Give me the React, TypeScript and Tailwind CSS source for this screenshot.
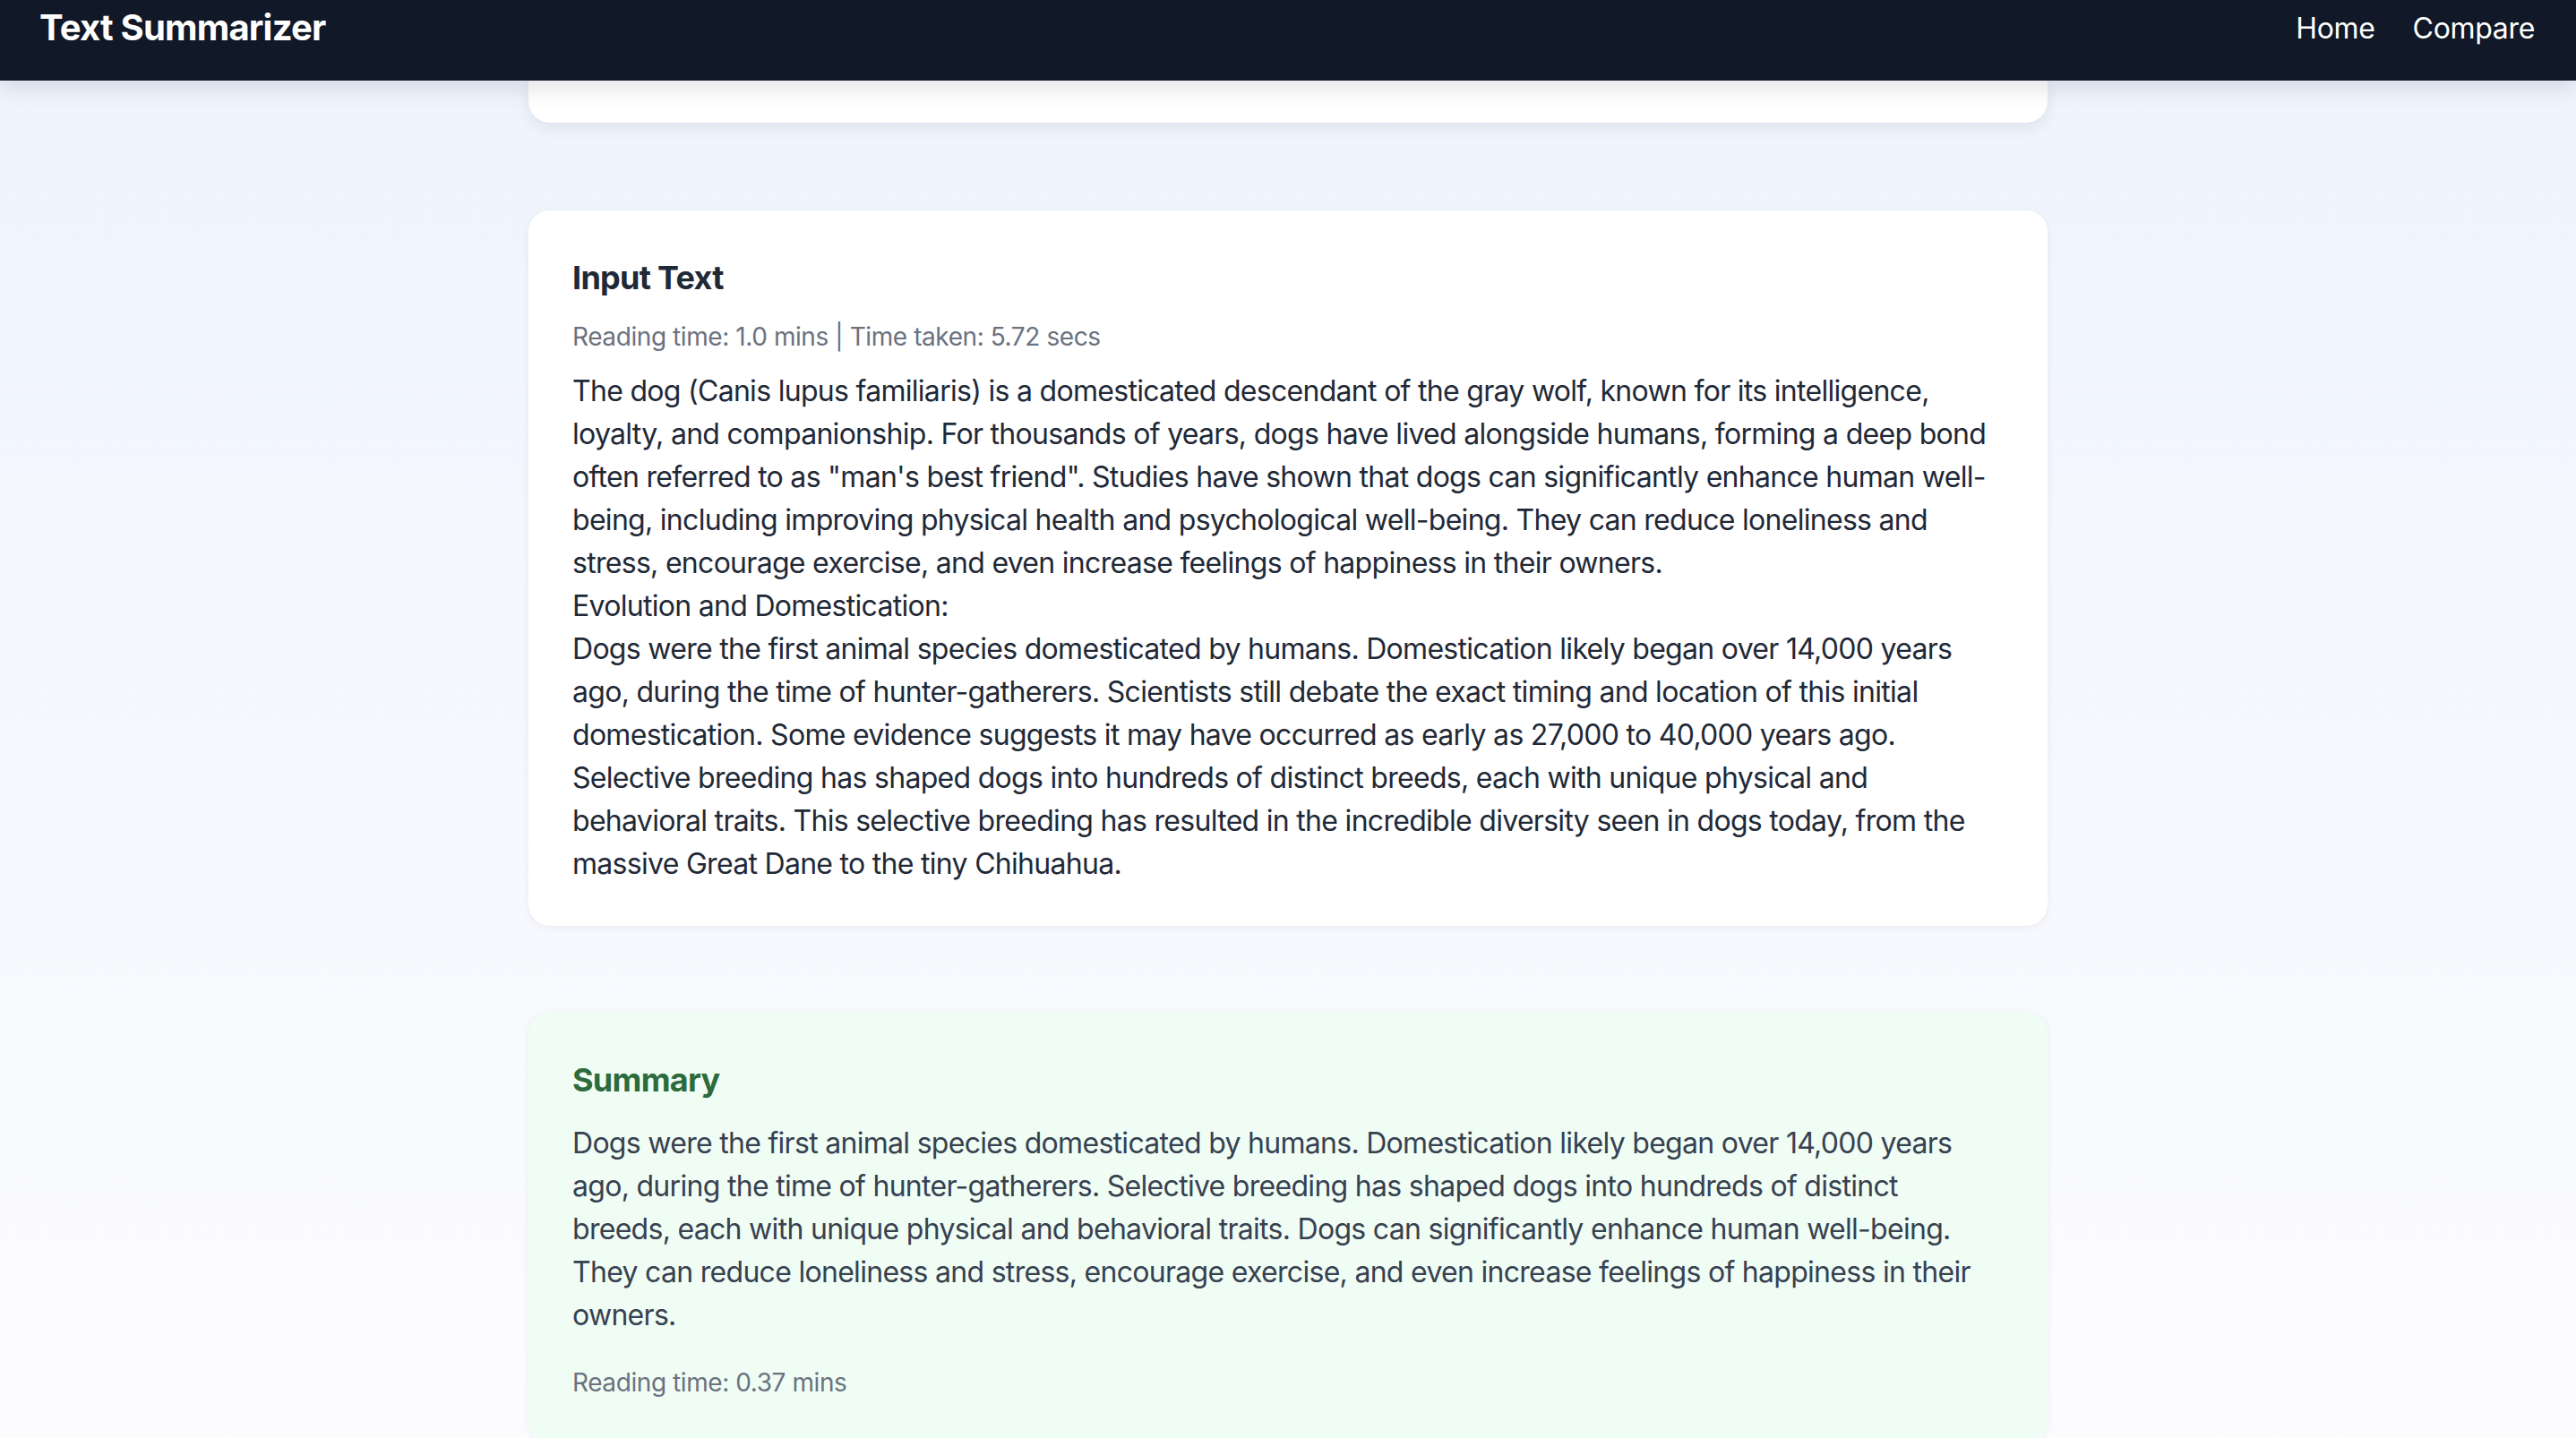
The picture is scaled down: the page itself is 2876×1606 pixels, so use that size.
import React from "react";

const inputLines = [
  "The dog (Canis lupus familiaris) is a domesticated descendant of the gray wolf, known for its intelligence,",
  "loyalty, and companionship. For thousands of years, dogs have lived alongside humans, forming a deep bond",
  "often referred to as \"man's best friend\". Studies have shown that dogs can significantly enhance human well-",
  "being, including improving physical health and psychological well-being. They can reduce loneliness and",
  "stress, encourage exercise, and even increase feelings of happiness in their owners.",
  "Evolution and Domestication:",
  "Dogs were the first animal species domesticated by humans. Domestication likely began over 14,000 years",
  "ago, during the time of hunter-gatherers. Scientists still debate the exact timing and location of this initial",
  "domestication. Some evidence suggests it may have occurred as early as 27,000 to 40,000 years ago.",
  "Selective breeding has shaped dogs into hundreds of distinct breeds, each with unique physical and",
  "behavioral traits. This selective breeding has resulted in the incredible diversity seen in dogs today, from the",
  "massive Great Dane to the tiny Chihuahua.",
];

const summaryLines = [
  "Dogs were the first animal species domesticated by humans. Domestication likely began over 14,000 years",
  "ago, during the time of hunter-gatherers. Selective breeding has shaped dogs into hundreds of distinct",
  "breeds, each with unique physical and behavioral traits. Dogs can significantly enhance human well-being.",
  "They can reduce loneliness and stress, encourage exercise, and even increase feelings of happiness in their",
  "owners.",
];

export default function App() {
  return (
    <div
      className="h-[1606px] w-full overflow-hidden bg-gradient-to-b from-[#eef3fd] to-[#fcfcfe] flex flex-col"
      style={{ fontFamily: "Inter, 'Noto Sans', sans-serif" }}
    >
      <nav className="relative z-10 h-[90px] shrink-0 bg-[#111827] shadow-[0_8px_24px_rgba(15,23,42,0.12)] flex items-start justify-between pl-[44px] pr-[46px]">
        <div className="pt-[3px] text-[40px] leading-[56px] font-bold text-white tracking-[-0.02em]">
          Text Summarizer
        </div>
        <div className="pt-[8px] flex gap-[42px] text-[32px] leading-[48px] text-white tracking-[-0.01em]">
          <span>Home</span>
          <span>Compare</span>
        </div>
      </nav>
      <main className="w-[1696px] mx-auto flex flex-col">
        <div className="h-[47px] bg-white rounded-b-[24px] shadow-[0_6px_16px_rgba(15,23,42,0.08)]" />
        <section className="mt-[98px] bg-white rounded-[24px] shadow-[0_2px_8px_rgba(15,23,42,0.06)] px-[49px] pt-[47px] pb-[45px]">
          <h2 className="text-[36px] leading-[56px] font-bold text-[#1f2937] tracking-[-0.02em]">Input Text</h2>
          <p className="mt-[18px] text-[28px] leading-[40px] text-[#6b7280] tracking-[-0.015em]">
            Reading time: 1.0 mins | Time taken: 5.72 secs
          </p>
          <div className="mt-[17px] text-[32px] leading-[48px] text-[#1f2937] tracking-[-0.022em]">
            {inputLines.map((l, i) => (
              <div key={i} className="whitespace-nowrap">{l}</div>
            ))}
          </div>
        </section>
        <section className="mt-[96px] bg-[#f0fdf4] rounded-[24px] shadow-[0_2px_8px_rgba(15,23,42,0.06)] px-[49px] pt-[48px] pb-[48px]">
          <h2 className="text-[36px] leading-[56px] font-bold text-[#2e6b3c] tracking-[-0.02em]">Summary</h2>
          <div className="mt-[19px] text-[32px] leading-[48px] text-[#374151] tracking-[-0.022em]">
            {summaryLines.map((l, i) => (
              <div key={i} className="whitespace-nowrap">{l}</div>
            ))}
          </div>
          <p className="mt-[31px] text-[28px] leading-[40px] text-[#6b7280] tracking-[-0.015em]">
            Reading time: 0.37 mins
          </p>
        </section>
      </main>
    </div>
  );
}
